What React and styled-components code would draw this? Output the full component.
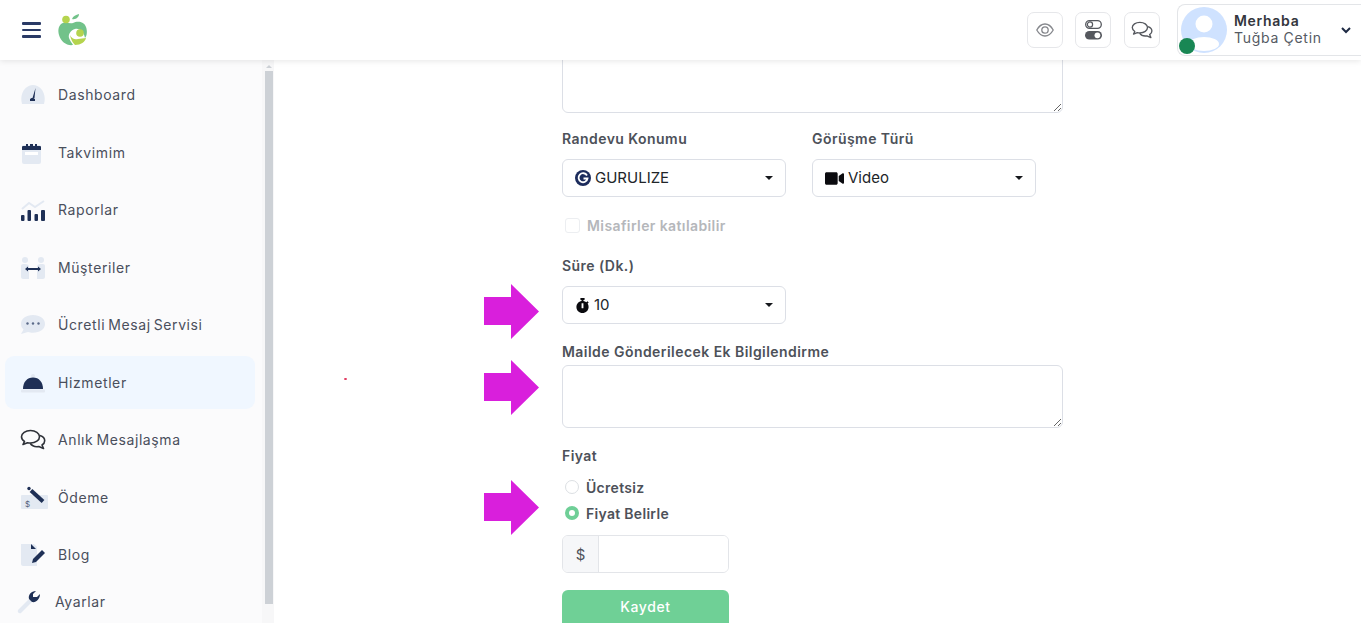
import React from 'react';
import styled, { createGlobalStyle } from 'styled-components';
import { FaStopwatch, FaVideo } from 'react-icons/fa';

const GlobalStyle = createGlobalStyle`
    html, body {
        margin:0;
        height:100%;
        overflow:hidden;
        background:#fff;
        font-family:"Inter","Open Sans",sans-serif;
    }
    * { box-sizing:border-box; }
`;

const Page = styled.div`
    width:1361px;
    height:623px;
    display:flex;
    flex-direction:column;
    overflow:hidden;
`;

const Header = styled.header`
    height:60px;
    flex:none;
    background:#fff;
    box-shadow:0 1px 6px rgba(0,0,0,0.1);
    display:flex;
    align-items:center;
    padding-left:22px;
    position:relative;
    z-index:2;
`;

const Burger = styled.div`
    width:19px;
    display:flex;
    flex-direction:column;
    gap:4.2px;
    margin-right:17px;
    span{
        height:2.5px;
        background:#2a3a66;
        border-radius:1px;
    }
`;

const HeaderRight = styled.div`
    margin-left:auto;
    display:flex;
    align-items:center;
`;

const IconButton = styled.div`
    width:36px;
    height:36px;
    border:1px solid #e6e7ea;
    border-radius:7px;
    margin-right:${props => props.$gap}px;
    display:flex;
    align-items:center;
    justify-content:center;
`;

const UserCard = styled.div`
    width:184px;
    height:52px;
    border:1px solid #e3e5e8;
    border-right:none;
    border-radius:8px 0 0 8px;
    display:flex;
    align-items:center;
    padding-left:3px;
    position:relative;
`;

const Avatar = styled.div`
    width:46px;
    height:46px;
    border-radius:50%;
    background:#cfe2ff;
    margin-right:7px;
    overflow:hidden;
`;

const OnlineDot = styled.span`
    position:absolute;
    left:1px;
    bottom:1px;
    width:16px;
    height:16px;
    border-radius:50%;
    background:#198754;
`;

const UserText = styled.div`
    display:flex;
    flex-direction:column;
    line-height:17px;
    margin-top:-3px;
    font-size:14px;
    letter-spacing:0.7px;
    color:#555a63;
    b{
        font-weight:600;
        color:#33363d;
    }
`;

const Chevron = styled.div`
    margin-left:auto;
    margin-right:10px;
    display:flex;
`;

const Body = styled.div`
    flex:1;
    display:flex;
    min-height:0;
`;

const Sidebar = styled.aside`
    width:274px;
    flex:none;
    background:#fbfbfc;
    display:flex;
`;

const Nav = styled.nav`
    flex:1;
    padding:8.5px 7px 0 5px;
    display:flex;
    flex-direction:column;
    gap:4.5px;
`;

const NavItem = styled.div`
    height:${props => props.$short ? '32px' : '53px'};
    flex:none;
    display:flex;
    align-items:center;
    gap:${props => props.$gap ?? 12}px;
    padding-left:${props => props.$short ? '12px' : '15px'};
    border-radius:9px;
    background:${props => props.$active ? '#f0f7ff' : 'transparent'};
    font-size:14px;
    letter-spacing:0.6px;
    word-spacing:-1.5px;
    color:#4a4f5c;
    svg{
        flex:none;
    }
    span{
        margin-top:-1px;
    }
`;

const ScrollTrack = styled.div`
    width:12px;
    flex:none;
    background:#f7f7f8;
    padding:5px 1.5px 0 3px;
    display:flex;
    flex-direction:column;
    align-items:stretch;
`;

const ScrollUp = styled.div`
    width:0;
    height:0;
    align-self:center;
    border-left:3px solid transparent;
    border-right:3px solid transparent;
    border-bottom:3px solid #cdd1d6;
    margin-bottom:3px;
`;

const ScrollThumb = styled.div`
    height:533px;
    background:#cdd1d6;
`;

const Main = styled.main`
    flex:1;
    padding-left:288px;
    position:relative;
    overflow:hidden;
    background:#fff;
`;

const Speck = styled.span`
    position:absolute;
    left:70px;
    top:318px;
    width:3px;
    height:2px;
    background:#e0325a;
    border-radius:50%;
`;

const Form = styled.form`
    width:501px;
    margin-top:-10px;
    display:flex;
    flex-direction:column;
`;

const Field = styled.div`
    position:relative;
    margin-top:${props => props.$top || 0}px;
`;

const Label = styled.div`
    font-size:14px;
    line-height:20px;
    font-weight:600;
    letter-spacing:0.45px;
    color:#4d5159;
    margin-bottom:${props => props.$gap ?? 10}px;
`;

const TextArea = styled.textarea`
    display:block;
    width:501px;
    height:${props => props.$height}px;
    border:1px solid #dcdfe6;
    border-radius:6px;
    outline:none;
    background:#fff;
`;

const Row = styled.div`
    display:flex;
    gap:26px;
    margin-top:16px;
`;

const Select = styled.div`
    width:224px;
    height:38px;
    border:1px solid #dcdfe6;
    border-radius:6px;
    display:flex;
    align-items:center;
    padding:0 12px;
    gap:4px;
    font-size:15px;
    color:#212529;
    span{
        margin-top:-2px;
    }
    &::after{
        content:"";
        margin-left:auto;
        border-left:4.5px solid transparent;
        border-right:4.5px solid transparent;
        border-top:4px solid #16181c;
    }
`;

const CheckRow = styled.div`
    height:20px;
    margin-top:18px;
    padding-left:3px;
    display:flex;
    align-items:center;
    gap:7px;
    font-size:14px;
    font-weight:600;
    letter-spacing:0.4px;
    color:#b5b7bb;
`;

const CheckBox = styled.span`
    width:15px;
    height:15px;
    border:1px solid #eceef1;
    border-radius:3px;
`;

const RadioRow = styled.div`
    height:20px;
    margin-top:${props => props.$top}px;
    padding-left:3px;
    display:flex;
    align-items:center;
    gap:7px;
    font-size:14px;
    font-weight:600;
    letter-spacing:0.3px;
    color:#4d5159;
`;

const Radio = styled.span`
    width:14px;
    height:14px;
    border-radius:50%;
    background:#fff;
    border:${props => props.$checked ? '4px solid #6fcf97' : '1px solid #dcdfe3'};
`;

const InputGroup = styled.div`
    width:167px;
    height:38px;
    margin-top:12px;
    border:1px solid #e3e5e9;
    border-radius:6px;
    display:flex;
    overflow:hidden;
`;

const Addon = styled.div`
    width:36px;
    flex:none;
    background:#f6f7f9;
    border-right:1px solid #e3e5e9;
    display:flex;
    align-items:center;
    justify-content:center;
    font-size:15px;
    color:#4d5159;
`;

const PriceInput = styled.input`
    flex:1;
    min-width:0;
    border:none;
    outline:none;
`;

const SaveButton = styled.button`
    width:167px;
    height:38px;
    flex:none;
    margin-top:17px;
    padding:0 0 6px;
    border:none;
    border-radius:6px;
    background:#6fd096;
    color:#fff;
    font-family:inherit;
    font-size:14px;
    font-weight:500;
    letter-spacing:0.6px;
`;

const ArrowMark = styled.svg`
    position:absolute;
    left:-78px;
    top:${props => props.$top}px;
`;

const Arrow = ({top}) => (
    <ArrowMark $top={top} width="55" height="55" viewBox="0 0 55 55">
        <path d="M0 13H27V0L55 27.5L27 55V41H0Z" fill="#d91fdc" />
    </ArrowMark>
);

const Logo = () => (
    <svg width="30" height="32" viewBox="0 0 30 32">
        <path d="M3 10C6 7 11 10 15 9C19 7 26 7 28 13C29.5 17 29 22 27 24C26 18 22 14 17 15C13 16 10 20 11 24C12 27 14 29 15 31C9 32 3 28 1 21C0 17 0 13 3 10Z" fill="#72c28a" />
        <circle cx="8" cy="5.5" r="3.8" fill="#b5d44e" />
        <circle cx="22" cy="19" r="3.8" fill="#b5d44e" />
        <path d="M12 21C14 25 17 26 20 25L28 24C27 28 23 31 17 31C15 29 13 26 12 21Z" fill="#b5d44e" />
        <path d="M14 5C15 2 18 1 21 0C21 3 18 6 14 5Z" fill="#72c28a" />
    </svg>
);

const Conversation = ({color = '#2e3138', size = 26}) => (
    <svg width={size} height={size * 0.85} viewBox="0 0 26 22" fill="none" stroke={color} strokeWidth="1.6" strokeLinejoin="round">
        <path d="M10.5 1.5C5.5 1.5 1.5 4.2 1.5 7.7C1.5 9.7 2.7 11.2 4.5 12.4L3 15.5L7.5 13.7C8.5 13.9 9.5 14 10.5 14C15.5 14 19.5 11.2 19.5 7.7C19.5 4.2 15.5 1.5 10.5 1.5Z" />
        <path d="M20 6.5C23 7.5 24.7 9.5 24.7 11.7C24.7 13.5 23.6 15 22 16L23.5 19.5L18.8 17.5C15.5 18 12 17 10.2 14.2" />
    </svg>
);

const icons = {
    dashboard: (
        <svg width="26" height="22" viewBox="0 0 26 22">
            <path d="M2 20C-1 9 6 1 13 1C20 1 27 9 24 20Z" fill="#e3e9f2" />
            <path d="M15.5 4L14.5 14H12.5Z M10 15C11 13.5 14 13.5 15 15V17H10Z" fill="#1f3056" />
        </svg>
    ),
    calendar: (
        <svg width="26" height="24" viewBox="0 0 26 24">
            <rect x="2" y="4" width="19" height="19" rx="2" fill="#e3e9f2" />
            <path d="M2 9V6C2 5 3 5 3 5H6V3H8V5H10V3H13V5H15V3H17V5H20C21 5 21 6 21 6V9Z" fill="#1f3056" />
            <rect x="5" y="11" width="13" height="3" fill="#fff" />
        </svg>
    ),
    chart: (
        <svg width="26" height="24" viewBox="0 0 26 24">
            <path d="M2 11L9 5L15 9L24 3" fill="none" stroke="#e3e9f2" strokeWidth="2" />
            <g fill="#1f3056">
                <rect x="1" y="17" width="3.5" height="6" rx="1" />
                <rect x="7.5" y="12" width="3.5" height="11" rx="1" />
                <rect x="14.5" y="16" width="3.5" height="7" rx="1" />
                <rect x="21" y="12" width="4" height="11" rx="1" />
            </g>
        </svg>
    ),
    customers: (
        <svg width="26" height="24" viewBox="0 0 26 24">
            <g fill="#e3e9f2">
                <circle cx="5" cy="4" r="3" />
                <circle cx="21" cy="4" r="3" />
                <path d="M1 10C1 8 3 8 5 8C8 8 9 9 9 11V23H3C2 23 1 22 1 21Z" />
                <path d="M25 10C25 8 23 8 21 8C18 8 17 9 17 11V23H23C24 23 25 22 25 21Z" />
            </g>
            <path d="M7 13H19" stroke="#1f3056" strokeWidth="2" />
            <path d="M8 10.5V15.5L5 13Z M18 10.5V15.5L21 13Z" fill="#1f3056" />
        </svg>
    ),
    message: (
        <svg width="26" height="22" viewBox="0 0 26 22">
            <path d="M13 1C6 1 1 4.5 1 10C1 12.5 2 14 3.5 15.5L1 20L8 18C9.5 18.5 11 18.7 13 18.7C20 18.7 25 15 25 10C25 4.5 20 1 13 1Z" fill="#e3e9f2" />
            <g fill="#5b6a88">
                <circle cx="7.5" cy="9.5" r="1.2" />
                <circle cx="13" cy="9.5" r="1.2" />
                <circle cx="18.5" cy="9.5" r="1.2" />
            </g>
        </svg>
    ),
    bell: (
        <svg width="26" height="20" viewBox="0 0 26 20">
            <circle cx="13" cy="3" r="2" fill="#e3e9f2" />
            <path d="M3 16C3 9 7 4.5 13 4.5C19 4.5 23 9 23 16Z" fill="#1f3056" />
            <rect x="1" y="16.5" width="24" height="3" rx="1" fill="#e3e9f2" />
        </svg>
    ),
    payment: (
        <svg width="28" height="24" viewBox="0 0 28 24">
            <rect x="1" y="9" width="27" height="14" rx="1" fill="#e3e9f2" />
            <path d="M11 4.5L23 15.5" stroke="#1f3056" strokeWidth="4" />
            <circle cx="9" cy="2.5" r="1.7" fill="#1f3056" />
            <text x="5" y="21" fontSize="8" fill="#4d5a78" fontFamily="Inter, sans-serif">$</text>
        </svg>
    ),
    blog: (
        <svg width="26" height="24" viewBox="0 0 26 24">
            <path d="M1 1H14L17 4V23H3C2 23 1 22 1 21Z" fill="#e3e9f2" />
            <path d="M11 1L16 6H11Z" fill="#1f3056" />
            <path d="M22 7L25 10L16 19L12 20L13 16Z" fill="#1f3056" />
        </svg>
    ),
    wrench: (
        <svg width="24" height="24" viewBox="0 0 24 24">
            <path d="M1 20L12 9L15 12L4 23C2 24 0 22 1 20Z" fill="#e3e9f2" />
            <path d="M12 9C11 5 14 1 19 1L16 4V7H20L23 4C23 9 19 13 15 12Z" fill="#1f3056" />
        </svg>
    ),
};

const menu = [
    {label: 'Dashboard', icon: icons.dashboard},
    {label: 'Takvimim', icon: icons.calendar},
    {label: 'Raporlar', icon: icons.chart},
    {label: 'Müşteriler', icon: icons.customers},
    {label: 'Ücretli Mesaj Servisi', icon: icons.message},
    {label: 'Hizmetler', icon: icons.bell, active: true},
    {label: 'Anlık Mesajlaşma', icon: <Conversation />},
    {label: 'Ödeme', icon: icons.payment, gap: 10},
    {label: 'Blog', icon: icons.blog},
    {label: 'Ayarlar', icon: icons.wrench, short: true, gap: 14},
];

const App = () => {
    return (
        <Page>
            <GlobalStyle />
            <Header>
                <Burger><span /><span /><span /></Burger>
                <Logo />
                <HeaderRight>
                    <IconButton $gap={12}>
                        <svg width="18" height="14" viewBox="0 0 18 14" fill="none" stroke="#85878c" strokeWidth="1.3">
                            <path d="M0.8 7C3 3 6 1 9 1C12 1 15 3 17.2 7C15 11 12 13 9 13C6 13 3 11 0.8 7Z" />
                            <circle cx="9" cy="7" r="3.2" />
                        </svg>
                    </IconButton>
                    <IconButton $gap={13}>
                        <svg width="17" height="20" viewBox="0 0 17 20">
                            <rect x="0.7" y="0.7" width="15.6" height="7.6" rx="3.8" fill="none" stroke="#55585e" strokeWidth="1.3" />
                            <circle cx="5" cy="4.5" r="2.6" fill="none" stroke="#55585e" strokeWidth="1.2" />
                            <rect x="0" y="11" width="17" height="8.6" rx="4.3" fill="#55585e" />
                            <circle cx="12.4" cy="15.3" r="2.9" fill="#fff" />
                        </svg>
                    </IconButton>
                    <IconButton $gap={17}>
                        <Conversation color="#55585e" size={22} />
                    </IconButton>
                    <UserCard>
                        <Avatar>
                            <svg width="46" height="46" viewBox="0 0 46 46">
                                <circle cx="23" cy="17" r="8.5" fill="#fff" />
                                <ellipse cx="23" cy="37" rx="15" ry="7" fill="#fff" />
                            </svg>
                        </Avatar>
                        <OnlineDot />
                        <UserText>
                            <b>Merhaba</b>
                            <span>Tuğba Çetin</span>
                        </UserText>
                        <Chevron>
                            <svg width="10" height="7" viewBox="0 0 10 7" fill="none" stroke="#1e2a44" strokeWidth="2">
                                <path d="M1 1L5 5L9 1" />
                            </svg>
                        </Chevron>
                    </UserCard>
                </HeaderRight>
            </Header>
            <Body>
                <Sidebar>
                    <Nav>
                        {menu.map(item => (
                            <NavItem key={item.label} $active={item.active} $short={item.short} $gap={item.gap}>
                                {item.icon}
                                <span>{item.label}</span>
                            </NavItem>
                        ))}
                    </Nav>
                    <ScrollTrack>
                        <ScrollUp />
                        <ScrollThumb />
                    </ScrollTrack>
                </Sidebar>
                <Main>
                    <Speck />
                    <Form>
                        <TextArea $height={63} />
                        <Row>
                            <div>
                                <Label>Randevu Konumu</Label>
                                <Select>
                                    <svg width="16" height="16" viewBox="0 0 16 16">
                                        <circle cx="8" cy="8" r="8" fill="#1c2c5c" />
                                        <path d="M12 5.5A4.5 4.5 0 1 0 12.5 8.5H8.5" fill="none" stroke="#fff" strokeWidth="1.8" />
                                    </svg>
                                    <span>GURULIZE</span>
                                </Select>
                            </div>
                            <div>
                                <Label>Görüşme Türü</Label>
                                <Select><FaVideo size={19} color="#0b0b0f" /><span>Video</span></Select>
                            </div>
                        </Row>
                        <CheckRow><CheckBox />Misafirler katılabilir</CheckRow>
                        <Field $top={21}>
                            <Label>Süre (Dk.)</Label>
                            <Select><FaStopwatch size={15} color="#0b0b0f" /><span>10</span></Select>
                            <Arrow top={28} />
                        </Field>
                        <Field $top={18}>
                            <Label $gap={3}>Mailde Gönderilecek Ek Bilgilendirme</Label>
                            <TextArea $height={63} />
                            <Arrow top={18} />
                        </Field>
                        <Field $top={18}>
                            <Label $gap={0}>Fiyat</Label>
                            <RadioRow $top={11}><Radio />Ücretsiz</RadioRow>
                            <RadioRow $top={6}><Radio $checked />Fiyat Belirle</RadioRow>
                            <Arrow top={34} />
                        </Field>
                        <InputGroup>
                            <Addon>$</Addon>
                            <PriceInput />
                        </InputGroup>
                        <SaveButton type="button">Kaydet</SaveButton>
                    </Form>
                </Main>
            </Body>
        </Page>
    );
}

export default App;
